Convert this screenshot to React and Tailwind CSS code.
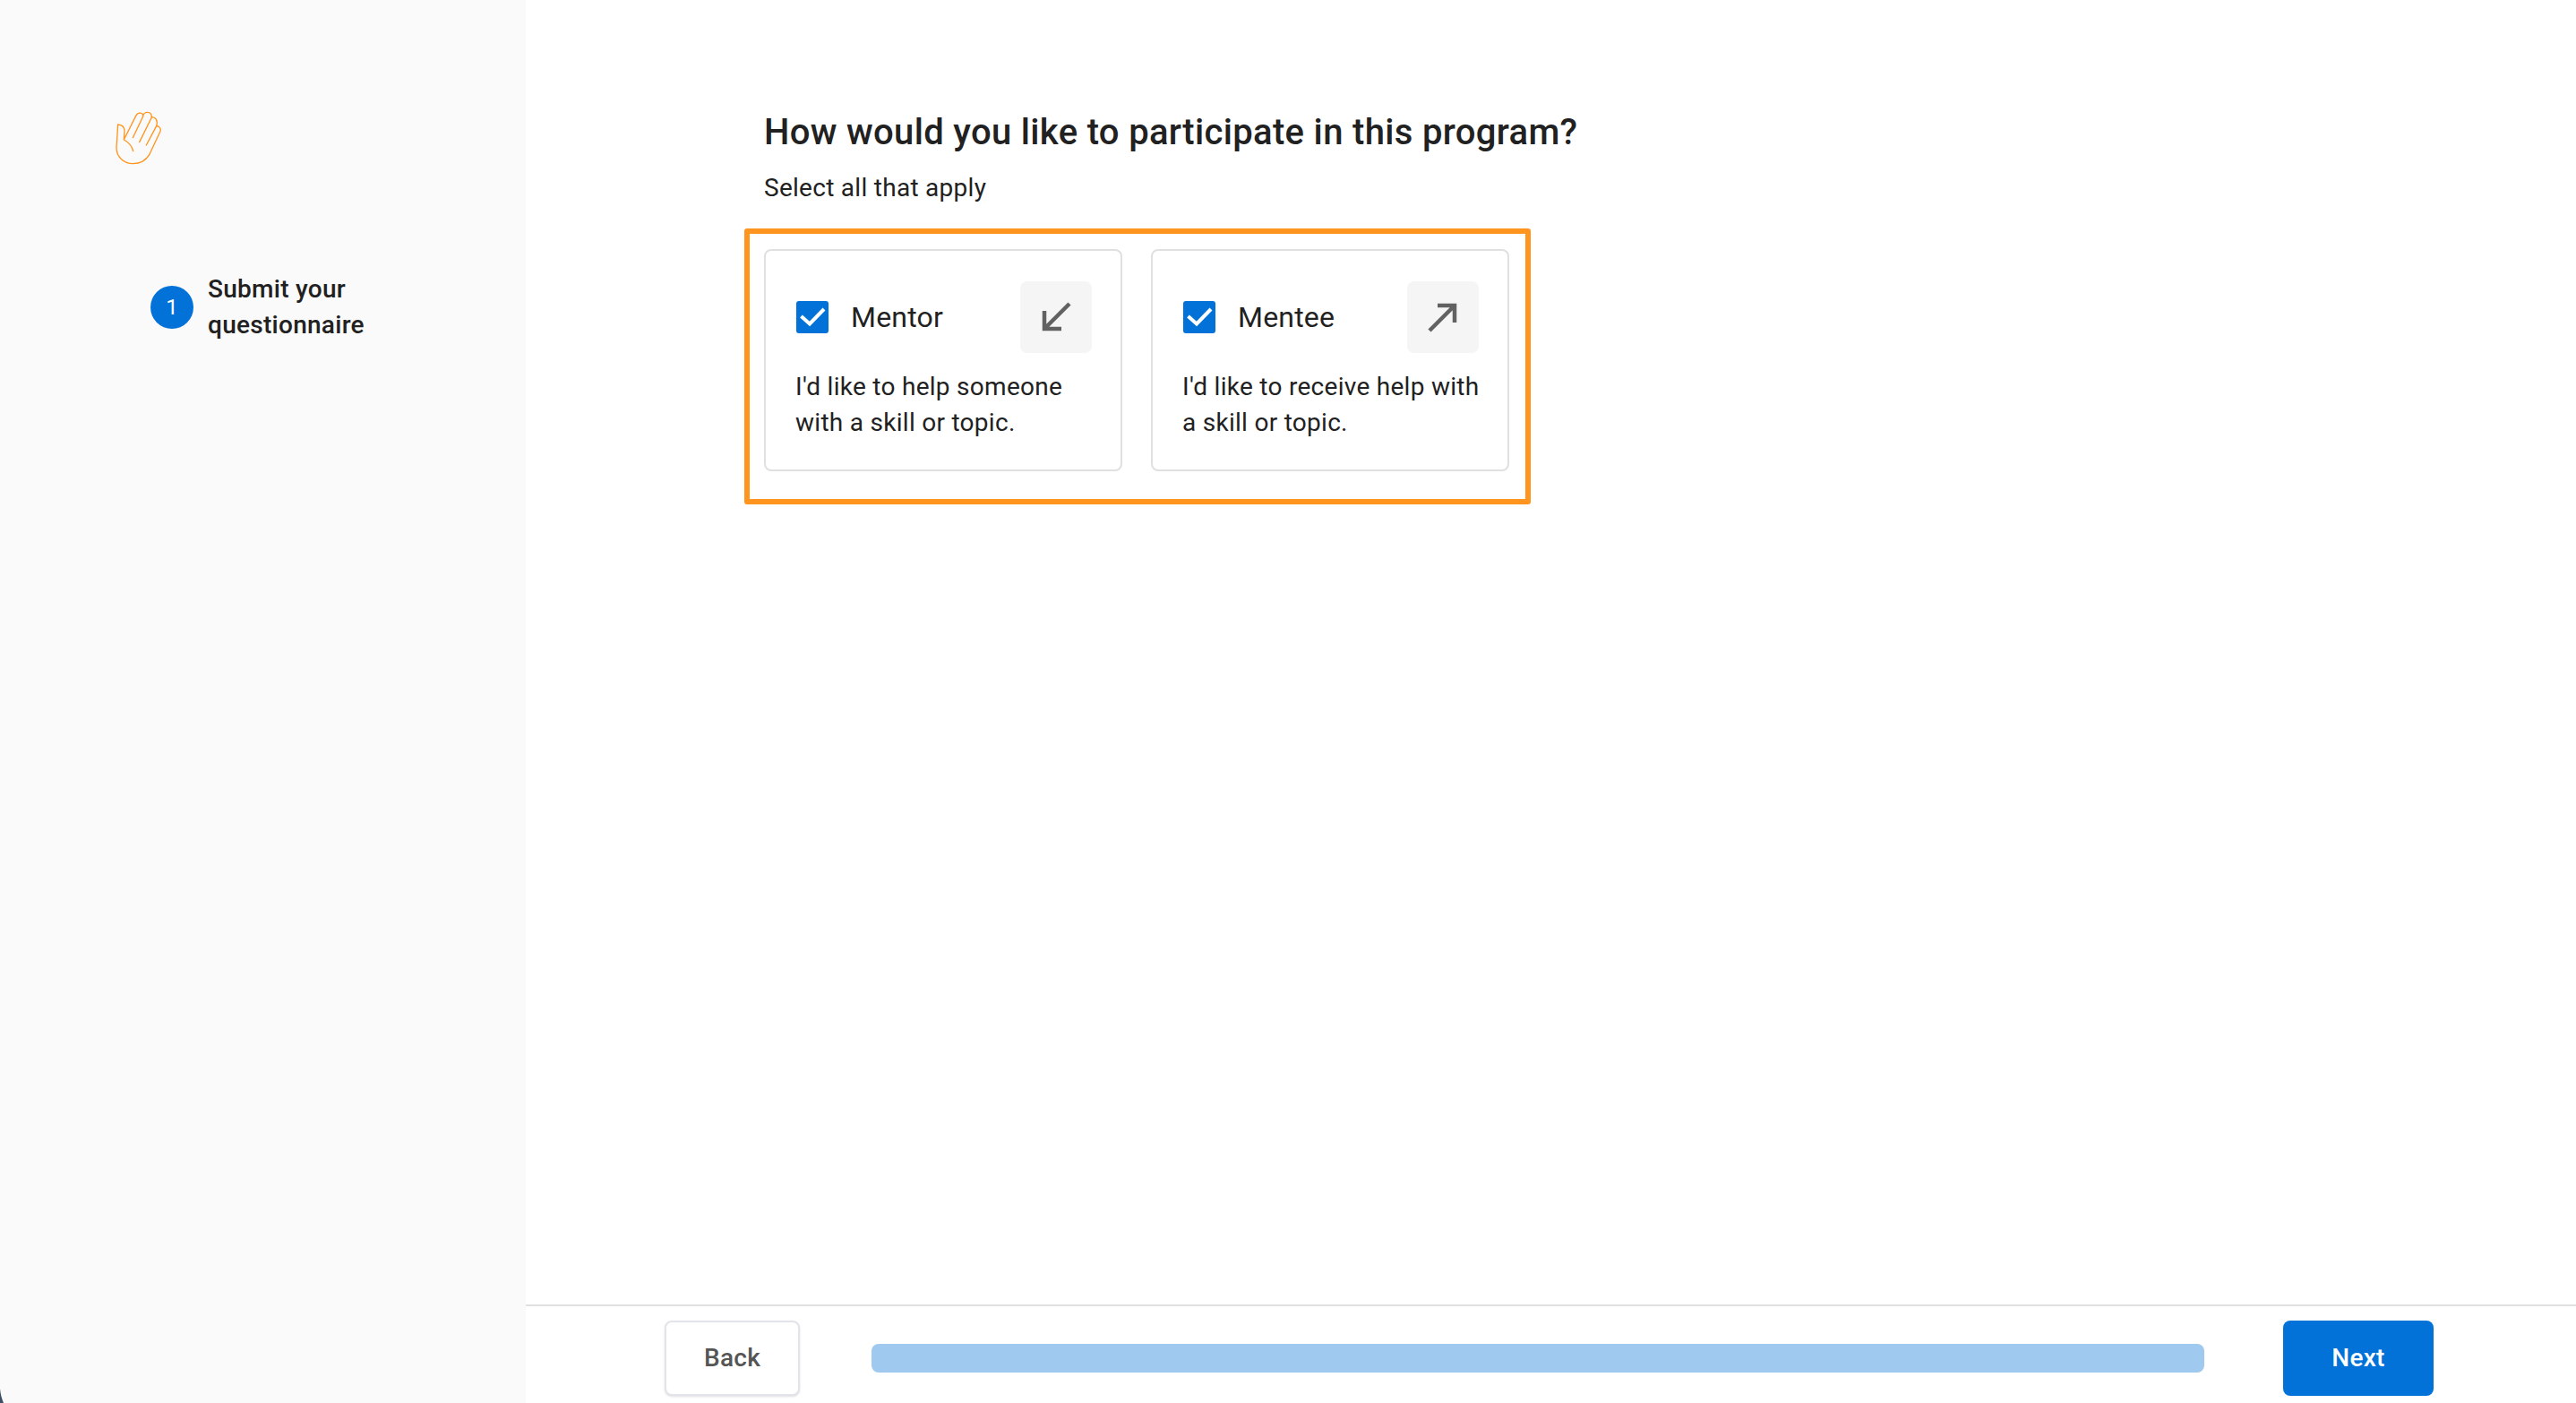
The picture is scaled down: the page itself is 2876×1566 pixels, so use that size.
const cards = [
  { title: 'Mentor', text: "I'd like to help someone with a skill or topic.", arrow: 'in' },
  { title: 'Mentee', text: "I'd like to receive help with a skill or topic.", arrow: 'out' },
]

function HandIcon() {
  return (
    <svg width="90" height="80" viewBox="0 0 270 240" fill="none" stroke="#ff951f" strokeWidth="4" strokeLinecap="round" strokeLinejoin="round">
      <path d="M85 138 L125 58 C132 44 150 46 149 60 C150 42 178 40 178 63 C190 60 200 74 194 92 C204 92 212 102 206 112 L170 188 C158 208 138 218 115 218 C84 218 60 194 60 165 L65 87 C78 88 86 94 87 106 L85 138 C100 146 112 160 116 176" />
      <path d="M115 131 L149 60" />
      <path d="M137 146 L178 63" />
      <path d="M160 156 L194 92" />
    </svg>
  )
}

function CardArrow({ direction }) {
  return (
    <svg width="80" height="80" viewBox="0 0 80 80" fill="none" stroke="#616161" strokeWidth="4.5">
      {direction === 'in' ? (
        <path d="M55 25 L27 53 M27 33 V53 H46" />
      ) : (
        <path d="M25 55 L53 27 M34 27 H53 V46" />
      )}
    </svg>
  )
}

function CheckMark() {
  return (
    <span className="w-9 h-9 rounded-[3px] bg-[#0372d8] flex items-center justify-center shrink-0">
      <svg width="36" height="36" viewBox="0 0 36 36" fill="none" stroke="#fff" strokeWidth="4">
        <path d="M5.5 17 L15 25.5 L31 9" />
      </svg>
    </span>
  )
}

export default function App() {
  return (
    <div className="relative h-[1566px] w-full flex overflow-hidden bg-white text-[#212121] font-['Roboto',sans-serif]">
      {/* Sidebar */}
      <aside className="w-[587px] shrink-0 bg-[#fafafa] pt-[124px]">
        <div className="ml-[110px] -mt-[14px]">
          <HandIcon />
        </div>
        <div className="flex items-center ml-[168px] mt-[113px]">
          <span className="w-12 h-12 rounded-full bg-[#0372d8] text-white text-[24px] flex items-center justify-center shrink-0">
            1
          </span>
          <p className="ml-[16px] text-[28px] leading-[40px] font-medium tracking-[0.28px]">
            Submit your
            <br />
            questionnaire
          </p>
        </div>
      </aside>

      {/* Main */}
      <main className="flex-1 flex flex-col">
        <div className="flex-1 pl-[266px] pt-[122px]">
          <h1 className="text-[40px] leading-[52px] font-medium tracking-[0.33px]">How would you like to participate in this program?</h1>
          <p className="text-[28px] leading-[40px] tracking-[0.28px] mt-[16px]">Select all that apply</p>

          <div className="-ml-[22px] mt-[25px] w-[878px] h-[308px] border-[6px] border-[#ff951f] rounded-[3px] pl-[16px] pt-[17px] flex gap-8 items-start">
            {cards.map((card) => (
              <div key={card.title} className="w-[400px] h-[248px] border-2 border-[#e0e0e0] rounded-[8px] pl-[34px] pr-[32px] pt-[34px]">
                <div className="flex items-center h-[80px]">
                  <CheckMark />
                  <span className="ml-[25px] text-[32px] leading-[40px] tracking-[0.2px]">{card.title}</span>
                  <span className="ml-auto w-20 h-20 rounded-[8px] bg-[#f5f5f5] shrink-0">
                    <CardArrow direction={card.arrow} />
                  </span>
                </div>
                <p className="mt-[18px] -ml-[1px] -mr-[8px] text-[28px] leading-[40px] tracking-[0.28px]">{card.text}</p>
              </div>
            ))}
          </div>
        </div>

        {/* Footer */}
        <footer className="h-[110px] border-t-2 border-[#e0e0e0] flex items-start pt-[16px] pl-[155px] pr-[159px]">
          <button className="w-[151px] h-[84px] border-2 border-[#e1e5ea] rounded-[8px] bg-white shadow-sm text-[28px] tracking-[0.28px] font-medium text-[#555555]">
            Back
          </button>
          <div className="flex-1 h-8 mt-[26px] ml-[80px] mr-[88px] rounded-[8px] bg-[#9fc9ef]" />
          <button className="w-[168px] h-[84px] rounded-[8px] bg-[#0372d8] text-[28px] tracking-[0.28px] font-medium text-white">
            Next
          </button>
        </footer>
      </main>

      {/* window corner at the very edge of the capture */}
      <svg className="absolute left-0 bottom-0" width="5" height="16" viewBox="0 0 5 16">
        <path d="M0 0 C0.5 6 2 11 4 16 H0 Z" fill="#3d4f66" />
      </svg>
    </div>
  )
}
